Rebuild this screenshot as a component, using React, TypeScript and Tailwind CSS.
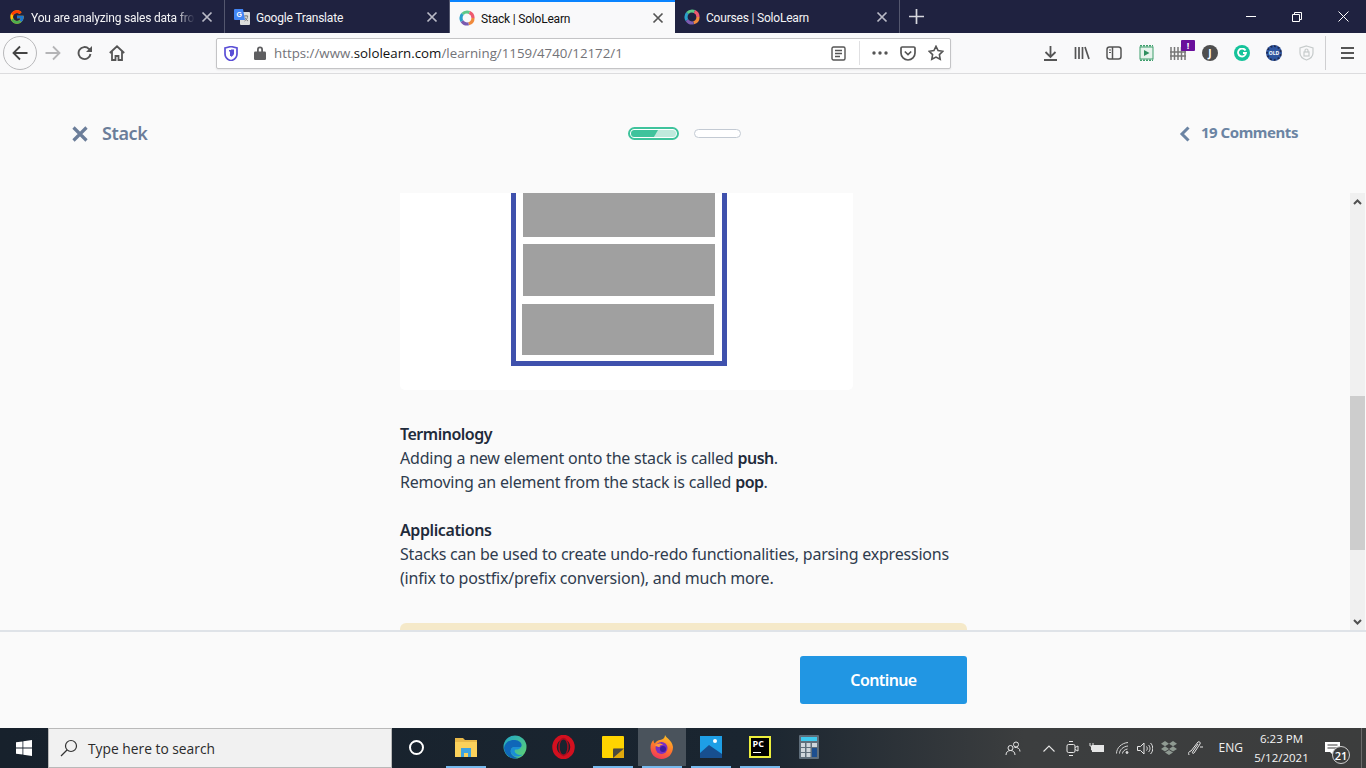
import { FcGoogle } from "react-icons/fc";

const uiFont = "font-['Open_Sans','Noto_Sans',sans-serif]";
const pageFont = "font-['Noto_Sans','Open_Sans',sans-serif]";

function Ring() {
  const segs = ["#f08a3c", "#7a5bb0", "#2a9fc9", "#5cc98a", "#ee5a6f"];
  return (
    <svg width="16" height="16" viewBox="0 0 16 16" fill="none" className="shrink-0">
      {segs.map((c, i) => (
        <circle key={c} cx="8" cy="8" r="6" stroke={c} strokeWidth="3.200" strokeDasharray="7.540 30.160" strokeDashoffset={-7.54 * i} />
      ))}
    </svg>
  );
}

function TranslateIcon() {
  return (
    <svg width="16" height="16" viewBox="0 0 16 16" className="shrink-0">
      <rect x="6" y="3" width="10" height="13" rx="1" fill="#dcdcdc" />
      <path d="M10 7h4M12 6v1M10.500 12c2-1 3-3 3.200-5M11 8.500c.6 1.600 1.700 2.800 3 3.500" stroke="#777" strokeWidth="0.9" fill="none" />
      <path d="M1 0h8l2 11H1a1 1 0 0 1-1-1V1a1 1 0 0 1 1-1z" fill="#4285f4" />
      <text x="2.500" y="7.500" fontSize="7" fontWeight="700" fill="#fff" fontFamily="Liberation Sans">G</text>
    </svg>
  );
}

function Tab({ icon, title, active, fade }: { icon: React.ReactNode; title: string; active?: boolean; fade?: boolean }) {
  return (
    <div
      className={
        active
          ? "flex h-full w-[225px] shrink-0 items-center border-t-2 border-[#0a84ff] bg-[#f9f9fa] pl-[9px] pr-[9px] text-[#111]"
          : "flex h-full w-[225px] shrink-0 items-center border-r border-[#54576e] pl-[9px] pr-[9px] text-[#f4f4f6]"
      }
    >
      {icon}
      <span
        className={
          fade
            ? "ml-[6px] w-[164px] overflow-hidden whitespace-nowrap pt-[2px] font-['Roboto',sans-serif] text-[12px] tracking-[-0.2px] [mask-image:linear-gradient(to_right,black_88%,transparent)]"
            : "ml-[6px] w-[164px] overflow-hidden whitespace-nowrap pt-[2px] font-['Roboto',sans-serif] text-[12px] tracking-[-0.2px]"
        }
      >
        {title}
      </span>
      <svg width="12" height="12" viewBox="0 0 12 12" className="ml-auto mr-[2px]" stroke={active ? "#555" : "#b9bac6"} strokeWidth="1.700" fill="none">
        <path d="M1.500 1.500l9 9M10.500 1.500l-9 9" />
      </svg>
    </div>
  );
}

function TabStrip() {
  return (
    <div className={`flex h-[33px] shrink-0 items-stretch bg-[#1f2240] ${uiFont}`}>
      <Tab icon={<FcGoogle size={16} className="shrink-0" />} title="You are analyzing sales data from" fade />
      <Tab icon={<TranslateIcon />} title="Google Translate" />
      <Tab icon={<Ring />} title="Stack | SoloLearn" active />
      <Tab icon={<Ring />} title="Courses | SoloLearn" />
      <div className="flex w-[33px] items-center justify-center">
        <svg width="15" height="15" viewBox="0 0 15 15" stroke="#d6d7de" strokeWidth="1.700">
          <path d="M7.500 0v15M0 7.500h15" />
        </svg>
      </div>
      <div className="ml-auto flex items-center">
        <div className="flex w-[46px] justify-center">
          <div className="h-px w-[10px] bg-white" />
        </div>
        <div className="flex w-[46px] justify-center">
          <svg width="10" height="10" viewBox="0 0 10 10" fill="none" stroke="#fff">
            <path d="M.5 2.500h7v7h-7zM2.500 2.500v-2h7v7h-2" />
          </svg>
        </div>
        <div className="flex w-[46px] justify-center">
          <svg width="11" height="11" viewBox="0 0 11 11" fill="none" stroke="#fff">
            <path d="M.5.5l10 10M10.500.5l-10 10" />
          </svg>
        </div>
      </div>
    </div>
  );
}

function Slot({ children }: { children: React.ReactNode }) {
  return <div className="relative flex h-[32px] w-[32px] shrink-0 items-center justify-center">{children}</div>;
}

function Toolbar() {
  return (
    <div className={`flex h-[41px] shrink-0 items-center border-b border-[#dcdcde] bg-[#f9f9fa] ${uiFont}`}>
      <div className="ml-[3px] flex h-[34px] w-[34px] items-center justify-center rounded-full border border-[#b8b8ba]">
        <svg width="16" height="16" viewBox="0 0 16 16" fill="none" stroke="#444" strokeWidth="1.800">
          <path d="M15.500 8H1.500M8 1.500L1.500 8 8 14.500" />
        </svg>
      </div>
      <Slot>
        <svg width="16" height="16" viewBox="0 0 16 16" fill="none" stroke="#b5b5b7" strokeWidth="1.800">
          <path d="M.5 8h14M8 1.500L14.500 8 8 14.500" />
        </svg>
      </Slot>
      <Slot>
        <svg width="16" height="16" viewBox="0 0 16 16" fill="none" stroke="#555" strokeWidth="1.900">
          <path d="M13.500 9a6 6 0 1 1-1.700-5.200L14.500 6" />
          <path d="M15 1v6H9z" fill="#555" stroke="none" />
        </svg>
      </Slot>
      <Slot>
        <svg width="16" height="16" viewBox="0 0 16 16" fill="none" stroke="#555" strokeWidth="1.800">
          <path d="M.8 8L8 1.300 15.200 8M3 6.500V15h3.500v-4h3v4H13V6.500" />
        </svg>
      </Slot>
      <div className="ml-[83px] flex h-[31px] w-[735px] shrink-0 items-center rounded-[2px] border border-[#c4c4c6] bg-white pl-[7px] shadow-[0_1px_2px_rgba(0,0,0,0.08)]">
        <svg width="14" height="15" viewBox="0 0 14 15" className="shrink-0">
          <path d="M1 2l6-1.500L13 2v6c0 3.500-3 5.800-6 6.800C4 13.800 1 11.500 1 8z" fill="none" stroke="#5b4fd6" strokeWidth="1.700" />
          <path d="M7 3.500h3v4c0 1.500-1.500 2.800-3 3.500z" fill="#5b4fd6" />
          <path d="M5 4h2v6H6V5.500H5z" fill="#5b4fd6" />
        </svg>
        <svg width="14" height="16" viewBox="0 0 14 16" className="ml-[15px] shrink-0" fill="#5f5f61">
          <path d="M4 7V4.500a3 3 0 0 1 6 0V7h-1.800V4.500a1.200 1.200 0 0 0-2.400 0V7z" />
          <rect x="1" y="6.500" width="12" height="8.500" rx="1.200" />
        </svg>
        <span className="ml-[7px] whitespace-nowrap pt-[2px] text-[13.300px] text-[#737378]">
          https://www.<span className="text-[#111]">sololearn.com</span>/learning/1159/4740/12172/1
        </span>
        <div className="ml-auto flex items-center">
          <svg width="15" height="15" viewBox="0 0 15 15" fill="none" stroke="#555" strokeWidth="1.400">
            <rect x="1" y="1" width="13" height="13" rx="1.500" />
            <path d="M4 4.500h7M4 7.500h7M4 10.500h5" />
          </svg>
          <div className="ml-[13px] mr-[4px] h-[24px] w-px bg-[#e0e0e2]" />
          <Slot>
            <svg width="16" height="4" viewBox="0 0 16 4" fill="#555">
              <circle cx="2" cy="2" r="1.700" />
              <circle cx="8" cy="2" r="1.700" />
              <circle cx="14" cy="2" r="1.700" />
            </svg>
          </Slot>
          <div className="-ml-[2px] w-[28px]">
            <svg width="16" height="15" viewBox="0 0 16 15" fill="none" stroke="#555" strokeWidth="1.700" className="mx-auto">
              <path d="M2.200 1h11.600A1.200 1.200 0 0 1 15 2.200V7a7 7 0 0 1-14 0V2.200A1.200 1.200 0 0 1 2.200 1z" />
              <path d="M4.800 5.500L8 8.500l3.200-3" />
            </svg>
          </div>
          <div className="w-[28px]">
            <svg width="16" height="16" viewBox="0 0 16 16" fill="none" stroke="#555" strokeWidth="1.600" className="mx-auto">
              <path d="M8 1.300l2.100 4.300 4.700.7-3.400 3.300.8 4.700L8 12.100l-4.200 2.200.8-4.700L1.200 6.300l4.700-.7z" />
            </svg>
          </div>
        </div>
      </div>
      <div className="ml-[83px] flex items-center">
        <Slot>
          <svg width="15" height="15" viewBox="0 0 15 15" fill="none" stroke="#555" strokeWidth="1.800">
            <path d="M7.500 0v10.500M2.500 6l5 5 5-5M1 14h13" />
          </svg>
        </Slot>
        <Slot>
          <svg width="16" height="14" viewBox="0 0 16 14" fill="none" stroke="#555" strokeWidth="1.700">
            <path d="M1.500 1v12M5 1v12M8.500 1v12M11 1l4 12" />
          </svg>
        </Slot>
        <Slot>
          <svg width="16" height="14" viewBox="0 0 16 14" fill="none" stroke="#555" strokeWidth="1.500">
            <rect x="1" y="1" width="14" height="12" rx="2.500" />
            <path d="M6.500 1v12" />
            <path d="M3 4h2M3 6.500h2" strokeWidth="1" />
          </svg>
        </Slot>
        <Slot>
          <svg width="15" height="16" viewBox="0 0 15 16" fill="none">
            <rect x="1" y="2" width="13" height="12" fill="#e7f3ec" stroke="#3f9f6c" />
            <path d="M1 .8h13M1 15.200h13" stroke="#3f9f6c" strokeWidth="1.600" strokeDasharray="2 1" />
            <path d="M5 5l5.500 3L5 11z" fill="#2f8f5f" />
          </svg>
        </Slot>
        <Slot>
          <svg width="16" height="14" viewBox="0 0 16 14" fill="none" stroke="#777" strokeWidth="1.500">
            <path d="M1 1v13M4.500 1v13M8 1v13M11.500 1v13M15 1v13M0 6h16M0 10h16" />
          </svg>
          <span className="absolute right-[-1px] top-[3px] flex h-[11px] w-[14px] items-center justify-center rounded-[1px] bg-[#6a0f9c] text-[9px] font-bold leading-none text-white">!</span>
        </Slot>
        <Slot>
          <span className="flex h-[16px] w-[16px] items-center justify-center rounded-full bg-[#4f4f4f] text-[10px] font-bold text-white">J</span>
        </Slot>
        <Slot>
          <span className="flex h-[16px] w-[16px] items-center justify-center rounded-full bg-[#15c39a]">
            <svg width="10" height="10" viewBox="0 0 10 10" fill="none" stroke="#fff" strokeWidth="1.800">
              <path d="M8.500 2.500a4 4 0 1 0 .5 2.500H6" />
            </svg>
          </span>
        </Slot>
        <Slot>
          <span className="flex h-[16px] w-[16px] items-center justify-center rounded-full border-2 border-dotted border-[#1b2a55] bg-[#2f56a0] text-[5px] font-bold leading-none text-white">OLD</span>
        </Slot>
        <Slot>
          <svg width="15" height="16" viewBox="0 0 15 16" fill="none" stroke="#c6cbcb" strokeWidth="1.200">
            <path d="M7.500 1L14 3v5c0 3.500-3.500 6-6.500 7C4.500 14 1 11.500 1 8V3z" />
            <rect x="5" y="7" width="5" height="4" />
            <path d="M6 7V5.500a1.500 1.500 0 0 1 3 0V7" />
          </svg>
        </Slot>
        <div className="ml-[3px] h-[34px] w-px bg-[#cfcfd1]" />
        <div className="ml-[5px]">
          <Slot>
            <svg width="13" height="12" viewBox="0 0 13 12" stroke="#555" strokeWidth="1.800">
              <path d="M0 1h13M0 6h13M0 11h13" />
            </svg>
          </Slot>
        </div>
      </div>
    </div>
  );
}

function PageHeader() {
  return (
    <div className="flex h-[119px] shrink-0 items-center pl-[72px] pr-[68px] text-[#6b7d99]">
      <div className="flex w-[556px] items-center">
        <svg width="16" height="16" viewBox="0 0 16 16" stroke="#6b7d99" strokeWidth="3.200">
          <path d="M1.500 1.500l13 13M14.500 1.500l-13 13" />
        </svg>
        <span className="mb-[2px] ml-[14px] text-[18px] font-semibold leading-none tracking-[-0.4px]">Stack</span>
      </div>
      <div className="flex h-[13px] w-[51px] items-center rounded-full border-2 border-[#3fc39c] bg-white p-px">
        <div className="flex h-full w-full overflow-hidden rounded-full bg-[#bfe9dc]">
          <div className="h-full w-[27px] bg-[#3fc39c] [clip-path:polygon(0_0,100%_0,85%_100%,0_100%)]" />
        </div>
      </div>
      <div className="ml-[15px] h-[9px] w-[47px] rounded-full border border-[#c3cad3] bg-white" />
      <div className="ml-auto flex items-center">
        <svg width="11" height="16" viewBox="0 0 11 16" fill="none" stroke="#6b84a3" strokeWidth="3">
          <path d="M9.500 1.500L3 8l6.500 6.500" />
        </svg>
        <span className="mb-[2px] ml-[11px] text-[15px] font-bold leading-none tracking-[-0.45px] text-[#6b84a3]">19 Comments</span>
      </div>
    </div>
  );
}

function StackFigure() {
  return (
    <div className="h-[197px] w-[453px] rounded-b-[5px] bg-white pl-[111px]">
      <div className="h-[173px] w-[216px] border-x-[5px] border-b-[5px] border-[#3f51ad] bg-white px-[7px]">
        <div className="h-[44px] w-[192px] bg-[#a0a0a0]" />
        <div className="mt-[7px] h-[52px] w-[192px] bg-[#a0a0a0]" />
        <div className="-ml-px mt-[8px] h-[51px] w-[192px] bg-[#a0a0a0]" />
      </div>
    </div>
  );
}

function ScrollBar() {
  return (
    <div className="mr-px flex w-[15px] shrink-0 flex-col bg-[#f0f0f0]">
      <div className="flex h-[17px] items-center justify-center">
        <svg width="9" height="6" viewBox="0 0 9 6" fill="none" stroke="#505050" strokeWidth="2">
          <path d="M1 5l3.500-3.500L8 5" />
        </svg>
      </div>
      <div className="mt-[186px] h-[154px] bg-[#cdcdcd]" />
      <div className="mt-auto flex h-[17px] items-center justify-center">
        <svg width="9" height="6" viewBox="0 0 9 6" fill="none" stroke="#505050" strokeWidth="2">
          <path d="M1 1l3.500 3.500L8 1" />
        </svg>
      </div>
    </div>
  );
}

function Lesson() {
  return (
    <div className={`flex min-h-0 flex-1 ${pageFont}`}>
      <div className="min-w-0 flex-1 overflow-hidden pl-[400px]">
        <StackFigure />
        <div className="mt-[32px] w-[567px] text-[16px] leading-[24px] tracking-[-0.21px] text-[#2f3c4e]">
          <p className="font-semibold tracking-[-0.5px] text-[#1f2b3b]">Terminology</p>
          <p>
            Adding a new element onto the stack is called <b className="font-semibold tracking-[-0.5px] text-[#1f2b3b]">push</b>.
          </p>
          <p>
            Removing an element from the stack is called <b className="font-semibold tracking-[-0.5px] text-[#1f2b3b]">pop</b>.
          </p>
          <p className="mt-[24px] font-semibold tracking-[-0.4px] text-[#1f2b3b]">Applications</p>
          <p>Stacks can be used to create undo-redo functionalities, parsing expressions (infix to postfix/prefix conversion), and much more.</p>
        </div>
        <div className="mt-[33px] h-[40px] w-[567px] rounded-t-[6px] bg-[#f5e9c9]" />
      </div>
      <ScrollBar />
    </div>
  );
}

function Footer() {
  return (
    <div className={`flex h-[98px] shrink-0 items-start border-t-2 border-[#dfe3e8] bg-[#fafafa] pl-[800px] pt-[24px] ${pageFont}`}>
      <button className="h-[48px] w-[167px] rounded-[3px] bg-[#2196e3] text-[16px] font-semibold tracking-[-0.6px] text-white">Continue</button>
    </div>
  );
}

function TaskSlot({ children, on, active }: { children: React.ReactNode; on?: boolean; active?: boolean }) {
  return (
    <div className="flex h-full w-[49px] shrink-0 flex-col items-center">
      <div className={active ? "flex w-[48px] flex-1 items-center justify-center bg-[#4a535c]" : "flex w-[48px] flex-1 items-center justify-center"}>{children}</div>
      <div className={on ? "h-[2px] w-[40px] bg-[#76b9ed]" : "h-[2px] w-[40px]"} />
    </div>
  );
}

function Taskbar() {
  return (
    <div className={`flex h-[40px] shrink-0 items-stretch bg-[linear-gradient(to_right,#17212c_0%,#1a2530_55%,#3c3e3f_75%,#3c3d3d_100%)] ${uiFont}`}>
      <div className="flex w-[48px] shrink-0 items-center justify-center">
        <svg width="16" height="16" viewBox="0 0 16 16" fill="#fff">
          <path d="M0 2.300l6.500-.9v6.200H0zM7.300 1.300L16 0v7.600H7.300zM0 8.400h6.500v6.200L0 13.700zM7.300 8.400H16V16l-8.700-1.300z" />
        </svg>
      </div>
      <div className="flex w-[344px] shrink-0 items-center border border-[#b9b9b9] bg-[#f1f1f1] pl-[11px]">
        <svg width="18" height="18" viewBox="0 0 18 18" fill="none" stroke="#333" strokeWidth="1.200">
          <circle cx="11" cy="7" r="5.500" />
          <path d="M7 11l-6 6" />
        </svg>
        <span className="ml-[10px] pt-[2px] text-[13.800px] text-[#2b2b2b]">Type here to search</span>
      </div>
      <TaskSlot>
        <div className="h-[15px] w-[15px] rounded-full border-2 border-white" />
      </TaskSlot>
      <TaskSlot on>
        <svg width="22" height="20" viewBox="0 0 22 20">
          <path d="M0 1h8l2 2h12v17H0z" fill="#e9b949" />
          <path d="M0 5h22v15H0z" fill="#fbd15b" />
          <path d="M6 11h10v9h-3v-4H9v4H6z" fill="#3fa3e0" />
        </svg>
      </TaskSlot>
      <TaskSlot>
        <svg width="24" height="24" viewBox="0 0 24 24">
          <defs>
            <linearGradient id="edgeA" x1="0" y1="0" x2="1" y2="1">
              <stop offset="0" stopColor="#1fa6c9" />
              <stop offset="1" stopColor="#62d36e" />
            </linearGradient>
          </defs>
          <circle cx="12" cy="12" r="11.500" fill="url(#edgeA)" />
          <path d="M1 13C2 7 7 4.500 12 5c5 .5 8 4 6 7h-6c-3 0-5 2-4 6 1 3 5 5 8 4.800C12 25 2 23 1 13z" fill="#0f67b8" />
          <path d="M8 18c-1-4 1-6 4-6h6c-1 2-3 2.500-5 2.500-1.500 0-2 2-.5 3.500 2 2 5 2.500 7 1.500-3 3-9 3-11.500-1.500z" fill="#1b8ed6" />
        </svg>
      </TaskSlot>
      <TaskSlot>
        <svg width="23" height="24" viewBox="0 0 23 24" fill="none">
          <ellipse cx="11.500" cy="12" rx="9" ry="10" stroke="#d3101f" strokeWidth="4.500" />
          <ellipse cx="11.500" cy="12" rx="4.500" ry="8.500" stroke="#a80c1d" strokeWidth="1.500" />
        </svg>
      </TaskSlot>
      <TaskSlot on>
        <svg width="22" height="22" viewBox="0 0 22 22">
          <rect width="22" height="22" rx="1" fill="#ffd400" />
          <path d="M11 22V12.500h11V22z" fill="#e2a90c" />
          <path d="M11 22l11-9.500H12a1 1 0 0 0-1 1z" fill="#4a4a3f" />
        </svg>
      </TaskSlot>
      <TaskSlot on active>
        <svg width="24" height="24" viewBox="0 0 24 24">
          <defs>
            <linearGradient id="foxA" x1="0.700" y1="0" x2="0.300" y2="1">
              <stop offset="0" stopColor="#ffc224" />
              <stop offset="0.500" stopColor="#ff7a2b" />
              <stop offset="1" stopColor="#f0345c" />
            </linearGradient>
          </defs>
          <path d="M15 0c1 3 7 5 8 12 0 7-5 12-11.500 12S.5 19 .5 12.500C.5 9 2 6.500 3.500 5c0 2 .5 3 1.500 3.500C6.500 5 11 5 13 4c1-1 2-2 2-4z" fill="url(#foxA)" />
          <circle cx="11.500" cy="13" r="6" fill="#7b2fc0" />
          <circle cx="13" cy="14" r="3" fill="#3d1d9c" />
          <path d="M5 10c3-2 6-2 8 0-3-.5-4 1-3 2-2 0-4-.5-5-2z" fill="#ff9a3c" />
        </svg>
      </TaskSlot>
      <TaskSlot on>
        <svg width="22" height="22" viewBox="0 0 22 22">
          <rect width="22" height="22" fill="#1e9fe6" />
          <circle cx="15" cy="5" r="2" fill="#fff" />
          <path d="M0 17l9-8 13 9v4H0z" fill="#174f8f" />
        </svg>
      </TaskSlot>
      <TaskSlot on>
        <div className="flex h-[22px] w-[22px] flex-col border-2 border-[#ecee3c] bg-black px-[2px] pt-[1px] text-[9px] font-bold leading-[10px] text-white">
          PC
          <div className="mt-[3px] h-px w-[8px] bg-white" />
        </div>
      </TaskSlot>
      <TaskSlot>
        <svg width="20" height="24" viewBox="0 0 20 24">
          <rect width="20" height="24" rx="1" fill="#5f6e7b" />
          <rect x="2" y="2" width="16" height="4" fill="#3fc9ee" />
          <path d="M2 8h4v4H2zM7.500 8h4v4h-4zM2 13h4v4H2zM7.500 13h4v4h-4zM2 18h4v4H2zM7.500 18h4v4h-4z" fill="#cfd6dc" />
          <rect x="13" y="13" width="5" height="9" fill="#1d4f8f" />
          <rect x="13" y="8" width="5" height="4" fill="#cfd6dc" />
        </svg>
      </TaskSlot>
      <div className="ml-auto flex items-center text-white">
        <svg width="16" height="15" viewBox="0 0 16 15" fill="none" stroke="#e6e6e6" className="mr-[22px]">
          <circle cx="5.500" cy="7" r="2.500" />
          <path d="M1 14c0-3 2-4.500 4.500-4.500S10 11 10 14" />
          <circle cx="11" cy="3.500" r="2.500" />
          <path d="M9.500 6.500c3-.5 5.500 1 5.500 4" />
        </svg>
        <svg width="12" height="7" viewBox="0 0 12 7" fill="none" stroke="#e6e6e6" strokeWidth="1.100" className="mr-[11px]">
          <path d="M.5 6.500L6 1l5.500 5.500" />
        </svg>
        <svg width="13" height="17" viewBox="0 0 13 17" fill="none" stroke="#e6e6e6" className="mr-[10px]">
          <rect x="1" y="4.500" width="8" height="8" rx="1.500" />
          <path d="M9 7.500l3-1.500v5l-3-1.500M3 1.500h4M3 15.500h4" />
        </svg>
        <svg width="15" height="12" viewBox="0 0 15 12" fill="none" stroke="#e6e6e6" className="mr-[12px]">
          <rect x="3.500" y="3.500" width="11" height="6" fill="#e6e6e6" />
          <path d="M1 1v3h3V1M2.500 4v4h1" />
        </svg>
        <svg width="13" height="12" viewBox="0 0 13 12" fill="none" stroke="#d6d6d6" className="mr-[8px]">
          <path d="M.5 11.500C.5 6 5.500 1 12 .5M3.500 11.500C3.500 8 7 4.500 12 4M6.500 11.500c0-2 2-4 5-4.500" />
          <circle cx="11" cy="10.500" r="1" fill="#e6e6e6" />
        </svg>
        <svg width="16" height="13" viewBox="0 0 16 13" fill="none" stroke="#e6e6e6" className="mr-[8px]">
          <path d="M.5 4.500h3l3.500-3.500v11L3.500 8.500h-3zM9.500 4.500c1 1 1 3 0 4M11.500 3c2 2 2 5 0 7M13.500 1c3 3 3 8 0 11" />
        </svg>
        <svg width="16" height="15" viewBox="0 0 16 15" fill="#8f9a92" className="mr-[11px]">
          <path d="M4 0L0 2.700l4 2.600 4-2.600zM12 0L8 2.700l4 2.600 4-2.600zM0 8l4 2.600L8 8 4 5.300zM8 8l4 2.600L16 8l-4-2.700zM4 11.500L8 14l4-2.500L8 9z" />
        </svg>
        <svg width="16" height="17" viewBox="0 0 16 17" fill="none" stroke="#e6e6e6" className="mr-[15px]">
          <path d="M1 15c-1-2 0-4 2-4l7-9c1-1 3 .5 2 2l-6 9c-1 1-2 0-1.500-1l5.500-8M12 7h3" />
        </svg>
        <span className="mr-[12px] text-[12px] text-[#f0f0f0]">ENG</span>
        <div className="mr-[17px] flex w-[53px] flex-col items-center whitespace-nowrap text-[11.500px] leading-[19px] text-[#f4f4f4]">
          <span>6:23 PM</span>
          <span>5/12/2021</span>
        </div>
        <div className="relative mr-[16px] h-[20px] w-[20px] pt-[3px]">
          <svg width="15" height="15" viewBox="0 0 15 15" fill="#fff">
            <path d="M0 1h15v10H8v3L5 11H0z" />
            <path d="M2.500 4h10M2.500 7h10" stroke="#3c3d3d" />
          </svg>
          <span className="absolute bottom-[-6px] right-[-5px] flex h-[18px] w-[18px] items-center justify-center rounded-full border border-[#cfcfcf] bg-[#3c3d3d] text-[11px] font-semibold leading-none text-white">21</span>
        </div>
        <div className="h-full w-[5px] border-l border-[#6b6b6b]" />
      </div>
    </div>
  );
}

export default function App() {
  return (
    <div className="flex h-[768px] w-[1366px] flex-col overflow-hidden bg-[#fafafa]">
      <TabStrip />
      <Toolbar />
      <PageHeader />
      <Lesson />
      <Footer />
      <Taskbar />
    </div>
  );
}
